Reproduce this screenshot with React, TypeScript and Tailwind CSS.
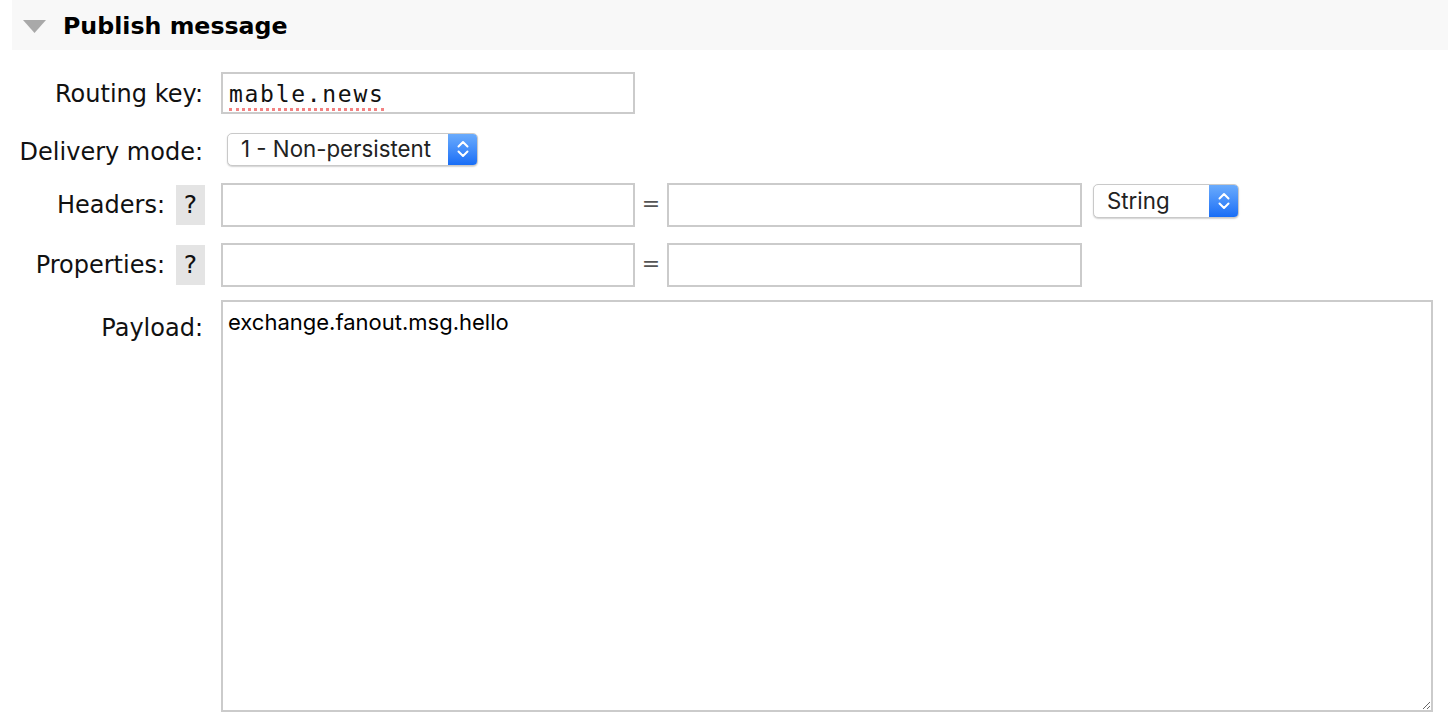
import React from "react";

const labelFont = "font-['DejaVu_Sans','Verdana',sans-serif]";
const uiFont = "font-['Inter','Noto_Sans',sans-serif]";

const Chevrons: React.FC = () => (
  <svg width="12" height="20" viewBox="0 0 12 20" fill="none">
    <path d="M1.5 7.5 L6 3 L10.5 7.5" stroke="white" strokeWidth="2" strokeLinecap="round" strokeLinejoin="round" />
    <path d="M1.5 12.5 L6 17 L10.5 12.5" stroke="white" strokeWidth="2" strokeLinecap="round" strokeLinejoin="round" />
  </svg>
);

const MacSelect: React.FC<{ label: string; className?: string }> = ({ label, className }) => {
  return (
    <div
      className={
        "flex items-stretch rounded-[5px] border border-[#c9c9c9] bg-white shadow-[0_1px_1.5px_rgba(0,0,0,0.18)] overflow-hidden " +
        (className ?? "")
      }
    >
      <div className={"flex-1 flex items-center pl-[13px] text-[22.3px] text-[#222] " + uiFont}>{label}</div>
      <div className="w-[29px] flex items-center justify-center bg-linear-to-b from-[#6aabfc] to-[#176df6]">
        <Chevrons />
      </div>
    </div>
  );
};

const Help: React.FC = () => (
  <div className="ml-[11px] w-[29px] h-[40px] bg-[#e4e4e4] flex items-center justify-center text-[25px] text-[#111]">?</div>
);

const Label: React.FC<{ text: string; help?: boolean; top?: boolean; shift?: string }> = ({ text, help, top, shift }) => (
  <div className={"w-[205px] flex justify-end shrink-0 " + (top ? "items-start pt-[10px]" : "items-center")}>
    <span className={"text-[24px] text-[#111] " + (help ? "" : "pr-[2px] ") + (shift ?? "")}>{text}</span>
    {help && <Help />}
  </div>
);

const inputCls = "h-[44px] border-2 border-[#cbcbcb] bg-white outline-none px-2";

const Eq: React.FC = () => (
  <div className="w-[32px] flex justify-center text-[22px] text-[#555] pb-[4px]">=</div>
);

export default function App() {
  return (
    <div className={"w-[1448px] h-[724px] bg-white overflow-hidden " + labelFont}>
      <div className="ml-[12px] h-[50px] bg-[#f8f8f8] flex items-center">
        <svg className="ml-[11px] mt-[2px]" width="23" height="13" viewBox="0 0 23 13">
          <polygon points="0,0 23,0 11.5,13" fill="#a9a9a9" />
        </svg>
        <h2 className="ml-[17px] mt-[3px] text-[23.7px] font-bold text-black">Publish message</h2>
      </div>

      <div className="mt-[22px] flex flex-col">
        {/* Routing key */}
        <div className="flex items-center h-[42px]">
          <Label text="Routing key:" shift="mt-[2px]" />
          <div className="ml-[16px] w-[414px] h-[42px] border-2 border-[#cbcbcb] flex items-center pl-[6px] pt-[4px]">
            <span className="font-['DejaVu_Sans_Mono',monospace] text-[23px] tracking-[1.7px] text-[#111] border-b-[3px] border-dotted border-[#f28282] leading-[28px]">
              mable.news
            </span>
          </div>
        </div>

        {/* Delivery mode */}
        <div className="mt-[19px] flex items-center h-[32px]">
          <Label text="Delivery mode:" shift="mt-[6px]" />
          <MacSelect label="1 - Non-persistent" className="ml-[22px] w-[251px] h-[33px]" />
        </div>

        {/* Headers */}
        <div className="mt-[18px] flex items-center h-[44px]">
          <Label text="Headers:" help />
          <input className={"ml-[16px] w-[414px] " + inputCls} />
          <Eq />
          <input className={"w-[415px] " + inputCls} />
          <MacSelect label="String" className="ml-[11px] w-[146px] h-[34px] self-start mt-[1px]" />
        </div>

        {/* Properties */}
        <div className="mt-[16px] flex items-center h-[44px]">
          <Label text="Properties:" help />
          <input className={"ml-[16px] w-[414px] " + inputCls} />
          <Eq />
          <input className={"w-[415px] " + inputCls} />
        </div>

        {/* Payload */}
        <div className="mt-[13px] flex items-start">
          <Label text="Payload:" top />
          <textarea
            readOnly
            defaultValue="exchange.fanout.msg.hello"
            className={"ml-[16px] w-[1212px] h-[412px] border-2 border-[#cbcbcb] px-[5px] py-[4px] text-[22px] text-black outline-none " + uiFont}
          />
        </div>
      </div>
    </div>
  );
}
